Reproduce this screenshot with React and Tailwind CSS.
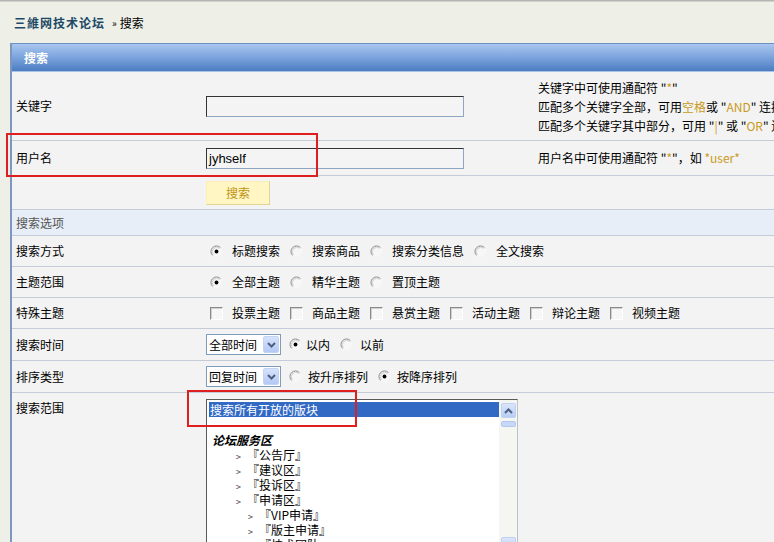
import React from "react";

const GOLD = "text-[#c99a1c]";

function Radio({ checked }) {
  return (
    <svg width="13" height="13" viewBox="0 0 13 13" className="shrink-0">
      <circle cx="6.5" cy="6.5" r="5.5" fill="#f7f7f7" />
      <path d="M2.6 10.4 A5.5 5.5 0 0 1 10.4 2.6" stroke="#8a8a8a" strokeWidth="1" fill="none" />
      <path d="M3.4 9.6 A4.4 4.4 0 0 1 9.6 3.4" stroke="#cfcfcf" strokeWidth="1" fill="none" />
      {checked && <circle cx="6.5" cy="6.5" r="1.9" fill="#000" />}
    </svg>
  );
}

function Check() {
  return (
    <span className="block w-[13px] h-[13px] shrink-0 border-t border-l border-t-[#8a8a8a] border-l-[#8a8a8a] border-b border-r border-b-[#ffffff] border-r-[#ffffff] bg-[#f7f7f7]">
      <span className="block w-full h-full border-t border-l border-t-[#d0d0d0] border-l-[#d0d0d0]" />
    </span>
  );
}

function Choice({ kind = "radio", checked, label, first }) {
  return (
    <span className={`flex items-center ${first ? "ml-[4px]" : "ml-[10px]"}`}>
      {kind === "radio" ? <Radio checked={checked} /> : <Check />}
      <span className="ml-[9px] whitespace-nowrap">{label}</span>
    </span>
  );
}

function Select({ value }) {
  return (
    <span className="flex items-center w-[75px] h-[21px] border border-[#7f9db9] bg-white">
      <span className="flex-1 pl-[2px] whitespace-nowrap leading-[19px]">{value}</span>
      <span className="flex items-center justify-center w-[16px] h-[17px] mr-[1px] rounded-[2px] bg-gradient-to-b from-[#d6e2fb] to-[#b4c9f4] border border-[#c2d3f6]">
        <svg width="9" height="6" viewBox="0 0 9 6">
          <path d="M1 1 L4.5 4.5 L8 1" stroke="#4d6185" strokeWidth="2" fill="none" />
        </svg>
      </span>
    </span>
  );
}

function Row({ label, h, children, className = "" }) {
  return (
    <div className={`flex items-center border-b border-[#c3ccd8] ${h} ${className}`}>
      <div className="w-[194px] pl-[4px] shrink-0 whitespace-nowrap">{label}</div>
      <div className="flex items-center flex-1">{children}</div>
    </div>
  );
}

function Input({ value }) {
  return (
    <div className="w-[258px] h-[21px] border-t border-l border-t-[#333] border-l-[#333] border-b border-r border-b-[#8fa6c0] border-r-[#8fa6c0] bg-[#f4f4f4] pl-[2px] leading-[19px] font-['Liberation_Sans',sans-serif] text-[13px]">
      {value}
    </div>
  );
}

const forums = [
  { t: "", lvl: -1 },
  { t: "论坛服务区", lvl: 0 },
  { t: "『公告厅』", lvl: 1 },
  { t: "『建议区』", lvl: 1 },
  { t: "『投诉区』", lvl: 1 },
  { t: "『申请区』", lvl: 1 },
  { t: "『VIP申请』", lvl: 2 },
  { t: "『版主申请』", lvl: 2 },
  { t: "『技术团队』", lvl: 2 },
];

function ForumList() {
  return (
    <div className="relative w-[312px] h-[156px] border border-t-[#5a5a5a] border-l-[#5a5a5a] border-r-[#b8c2cc] border-b-[#b8c2cc] bg-white overflow-hidden">
      <div className="absolute left-0 top-0 bottom-0 right-[18px] pt-[2px] pl-[2px]">
        <div className="h-[15px] leading-[15px] bg-[#316ac5] text-white pl-[1px] whitespace-nowrap">搜索所有开放的版块</div>
        {forums.map((f, i) =>
          f.lvl === -1 ? (
            <div key={i} className="h-[15px]" />
          ) : f.lvl === 0 ? (
            <div key={i} className="h-[15px] leading-[15px] pl-[3px] font-bold italic whitespace-nowrap">{f.t}</div>
          ) : (
            <div key={i} className={`h-[15px] leading-[15px] whitespace-nowrap overflow-hidden ${f.lvl === 1 ? "pl-[27px]" : "pl-[39px]"}`}>
              <span className="inline-block text-[9px] w-[11px] text-[#333]">&gt;</span>
              {f.t}
            </div>
          )
        )}
      </div>
      {/* vertical scrollbar */}
      <div className="absolute right-0 top-0 bottom-0 w-[18px] bg-[#f5f5f1] flex flex-col items-center pt-[3px]">
        <div className="flex items-center justify-center w-[15px] h-[15px] rounded-[2px] bg-gradient-to-b from-[#dbe6fc] to-[#b9cdf5] border border-[#bfd0f3]">
          <svg width="9" height="6" viewBox="0 0 9 6">
            <path d="M1 5 L4.5 1.5 L8 5" stroke="#4d6185" strokeWidth="2" fill="none" />
          </svg>
        </div>
        <div className="mt-[3px] w-[15px] h-[6px] rounded-[2px] bg-[#c8d8f8] border border-[#b3c7f0]" />
        <div className="flex-1" />
        <div className="w-[15px] h-[15px] mb-[2px] rounded-[2px] bg-gradient-to-b from-[#dbe6fc] to-[#b9cdf5] border border-[#bfd0f3]" />
      </div>
    </div>
  );
}

export default function App() {
  return (
    <div className="relative w-[774px] h-[542px] overflow-hidden bg-[#eef0e8] text-[12px] text-black font-['Noto_Sans_CJK_SC',sans-serif]">
      <div className="h-[2px] bg-gradient-to-b from-[#a8a8a8] to-[#dedfd8]" />
      {/* breadcrumb */}
      <div className="h-[41px] flex items-center pl-[14px] whitespace-nowrap">
        <span className="font-bold text-[#1d4a66] tracking-[1px]">三維网技术论坛</span>
        <span className="ml-[7px] text-[10px]">»</span>
        <span className="ml-[3px]">搜索</span>
      </div>

      {/* search panel */}
      <div className="ml-[10px] w-[800px] border-l-2 border-[#7e98bd] bg-[#f3f3f3]">
        <div className="h-[29px] border-t border-[#6e8fc0] bg-gradient-to-b from-[#a9c7ef] via-[#7ba3dc] to-[#4c7dc2] flex items-center pl-[12px] border-b border-b-[#a9c2e6]">
          <span className="text-white font-bold">搜索</span>
        </div>

        <Row label="关键字" h="h-[69px]">
          <div className="w-[332px] shrink-0">
            <Input value="" />
          </div>
          <div className="leading-[19px] whitespace-nowrap pt-[1px]">
            <div>关键字中可使用通配符 "<span className={GOLD}>*</span>"</div>
            <div>
              匹配多个关键字全部，可用<span className={GOLD}>空格</span>或 "<span className={GOLD}>AND</span>" 连接。如 <span className={GOLD}>win32 AND unix</span>
            </div>
            <div>
              匹配多个关键字其中部分，可用 "<span className={GOLD}>|</span>" 或 "<span className={GOLD}>OR</span>" 连接。如 <span className={GOLD}>win32 OR unix</span>
            </div>
          </div>
        </Row>

        <Row label="用户名" h="h-[35px]">
          <div className="w-[332px] shrink-0">
            <Input value="jyhself" />
          </div>
          <div className="whitespace-nowrap">
            用户名中可使用通配符 "<span className={GOLD}>*</span>"，如 <span className={GOLD}>*user*</span>
          </div>
        </Row>

        <Row label="" h="h-[34px]">
          <button className="w-[64px] h-[24px] bg-[#fff6c4] border border-[#fbefb8] border-b-[#e2d397] border-r-[#e2d397] text-[#c09414]">
            搜索
          </button>
        </Row>

        <div className="h-[26px] flex items-center pl-[4px] bg-[#e7eef8] border-b border-[#c3ccd8] text-[#555]">搜索选项</div>

        <Row label="搜索方式" h="h-[31px]">
          <Choice first checked label="标题搜索" />
          <Choice label="搜索商品" />
          <Choice label="搜索分类信息" />
          <Choice label="全文搜索" />
        </Row>

        <Row label="主题范围" h="h-[31px]">
          <Choice first checked label="全部主题" />
          <Choice label="精华主题" />
          <Choice label="置顶主题" />
        </Row>

        <Row label="特殊主题" h="h-[31px]">
          <Choice first kind="check" label="投票主题" />
          <Choice kind="check" label="商品主题" />
          <Choice kind="check" label="悬赏主题" />
          <Choice kind="check" label="活动主题" />
          <Choice kind="check" label="辩论主题" />
          <Choice kind="check" label="视频主题" />
        </Row>

        <Row label="搜索时间" h="h-[32px]">
          <Select value="全部时间" />
          <span className="flex items-center ml-[8px]">
            <Radio checked />
            <span className="ml-[4px]">以内</span>
          </span>
          <span className="flex items-center ml-[10px]">
            <Radio />
            <span className="ml-[7px]">以前</span>
          </span>
        </Row>

        <Row label="排序类型" h="h-[32px]">
          <Select value="回复时间" />
          <span className="flex items-center ml-[8px]">
            <Radio />
            <span className="ml-[6px]">按升序排列</span>
          </span>
          <span className="flex items-center ml-[10px]">
            <Radio checked />
            <span className="ml-[6px]">按降序排列</span>
          </span>
        </Row>

        <div className="flex pt-[6px]">
          <div className="w-[194px] pl-[4px] shrink-0 leading-[18px]">搜索范围</div>
          <ForumList />
        </div>
      </div>

      {/* red annotation frames */}
      <div className="absolute left-[6px] top-[133px] w-[312px] h-[44px] border-2 border-[#dd1f1f]" />
      <div className="absolute left-[187px] top-[390px] w-[170px] h-[37px] border-2 border-[#dd1f1f]" />
    </div>
  );
}
